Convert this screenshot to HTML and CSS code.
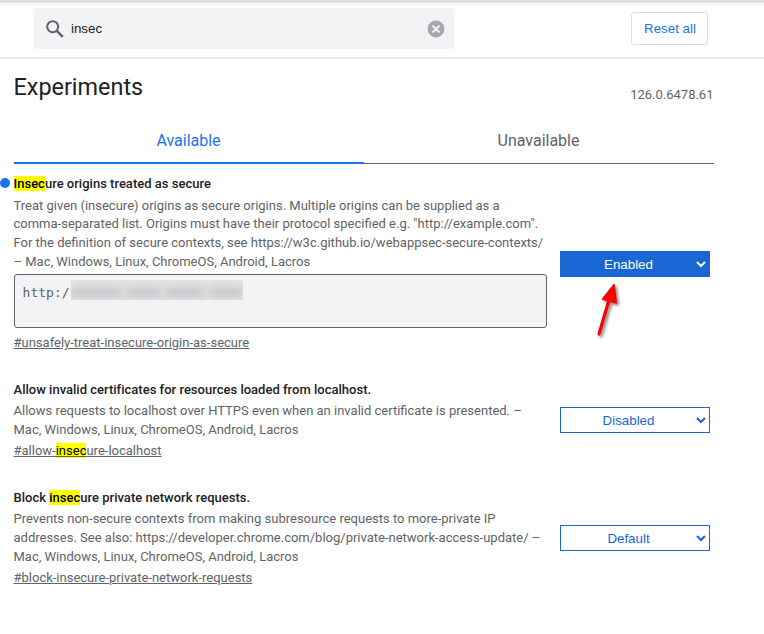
FILE: index.html
```html
<!DOCTYPE html>
<html lang="en">
<head>
<meta charset="utf-8">
<title>Experiments</title>
<link rel="stylesheet" href="styles.css">
</head>
<body>
<header class="toolbar">
  <div class="search">
    <svg class="search-icon" width="18" height="18" viewBox="0 0 18 18"><circle cx="6.7" cy="6.7" r="5.5" fill="none" stroke="#5f6368" stroke-width="2"/><path d="M10.8 10.8L16.8 16.8" stroke="#5f6368" stroke-width="2.4"/></svg>
    <span class="query">insec</span>
    <svg class="clear-icon" width="18" height="18" viewBox="0 0 18 18"><circle cx="9" cy="9" r="8.4" fill="#a5a8ab"/><path d="M5.5 5.5l7 7M12.5 5.5l-7 7" stroke="#f1f3f4" stroke-width="2"/></svg>
  </div>
  <button class="reset">Reset all</button>
</header>
<main>
  <div class="heading"><h1>Experiments</h1><span class="version">126.0.6478.61</span></div>
  <nav class="tabs"><div class="tab selected">Available</div><div class="tab">Unavailable</div></nav>
  <section class="experiment modified">
    <div class="body">
      <h2><mark>Insec</mark>ure origins treated as secure</h2>
      <p>Treat given (insecure) origins as secure origins. Multiple origins can be supplied as a<br>comma-separated list. Origins must have their protocol specified e.g. "http://example.com".<br>For the definition of secure contexts, see https://w3c.github.io/webappsec-secure-contexts/<br>– Mac, Windows, Linux, ChromeOS, Android, Lacros</p>
      <div class="origins"><span>http:/</span><div class="redacted"><i class="w1"></i><i class="w2"></i><i class="w3"></i><i class="w4"></i></div></div>
      <a class="permalink">#unsafely-treat-insecure-origin-as-secure</a>
    </div>
    <div class="action">
      <select class="choice active"><option>Enabled</option></select>
      <svg class="arrow" width="44" height="66" viewBox="0 0 44 66"><g fill="#f00"><path d="M14 54L24 20" stroke="#f00" stroke-width="3.2" stroke-linecap="round"/><path d="M28.5 4Q29.5 3.4 29.8 5L32 22.5Q32 24 30.4 23.5L17.4 20Q16.2 19.4 17.2 18.3Z"/></g></svg>
    </div>
  </section>
  <section class="experiment second">
    <div class="body">
      <h2>Allow invalid certificates for resources loaded from localhost.</h2>
      <p>Allows requests to localhost over HTTPS even when an invalid certificate is presented. –<br>Mac, Windows, Linux, ChromeOS, Android, Lacros</p>
      <a class="permalink">#allow-<mark>insec</mark>ure-localhost</a>
    </div>
    <div class="action"><select class="choice"><option>Disabled</option></select></div>
  </section>
  <section class="experiment third">
    <div class="body">
      <h2>Block <mark>insec</mark>ure private network requests.</h2>
      <p>Prevents non-secure contexts from making subresource requests to more-private IP<br>addresses. See also: https://developer.chrome.com/blog/private-network-access-update/ –<br>Mac, Windows, Linux, ChromeOS, Android, Lacros</p>
      <a class="permalink">#block-insecure-private-network-requests</a>
    </div>
    <div class="action"><select class="choice"><option>Default</option></select></div>
  </section>
</main>
</body>
</html>
```

FILE: styles.css
```css
* { box-sizing: border-box; }
body {
  margin: 0;
  background: #fff;
  color: #202124;
  font: 13px/18.85px Roboto, sans-serif;
  overflow: hidden;
}
.toolbar {
  height: 57px;
  padding: 8px 56px 0 34px;
  display: flex;
  justify-content: space-between;
  align-items: flex-start;
  background: linear-gradient(#dfe2e1 0, #d4d8d6 2px, #f1f2f2 3px, #fff 6px);
  box-shadow: 0 1px 0 #e6e8e8, 0 2px 0 #f0f1f1, 0 3px 0 #fafafa;
}
.search {
  width: 420px;
  height: 41px;
  padding: 0 9px 0 12px;
  display: flex;
  align-items: center;
  background: #f1f3f4;
  border-radius: 3px;
}
.query {
  flex: 1;
  margin-left: 7px;
  font: 13.33px "Liberation Sans", sans-serif;
}
.reset {
  width: 77px;
  height: 33px;
  margin-top: 4px;
  padding: 0 0 0 1px;
  border: 1px solid #dadce0;
  border-radius: 3px;
  background: #fff;
  color: #1a73e8;
  font: 13.33px "Liberation Sans", sans-serif;
}
main { width: 714px; padding-left: 14px; }
.heading {
  height: 60px;
  margin-left: -.5px;
  padding-right: .5px;
  display: flex;
  justify-content: space-between;
}
h1 { margin: 15px 0 0; font-size: 23.4px; line-height: 30px; font-weight: 400; }
.version { margin-top: 29px; color: #5f6368; }
.tabs { display: flex; height: 47px; }
.tab {
  flex: 1;
  padding-right: 1px;
  text-align: center;
  font-size: 16px;
  line-height: 47px;
  color: #5f6368;
  border-bottom: 1px solid #5f6368;
}
.tab.selected { color: #1a73e8; border-bottom: 2px solid #1a73e8; }
.experiment { display: flex; position: relative; width: 696px; }
.modified { height: 207px; padding-top: 11px; }
.modified::before {
  content: "";
  position: absolute;
  left: -14px;
  top: 14px;
  width: 10px;
  height: 10px;
  border-radius: 5px;
  background: #1a73e8;
}
.second { height: 108px; padding-top: 10px; }
.third { height: 120px; padding-top: 10px; }
.body { width: 533px; white-space: nowrap; color: #5f6368; }
h2 { margin: 0 0 2.5px; font-size: 13px; line-height: 18.85px; font-weight: 500; letter-spacing: .01px; color: #202124; }
p { margin: 0 0 2.5px; }
h2, p, .permalink { margin-left: -.5px; }
.modified h2 { margin-bottom: 2.8px; }
.modified p { margin-bottom: 1.7px; }
.second p { margin-bottom: 1.6px; }
mark { background: #ff0; color: #000; }
.permalink { display: block; text-decoration: underline; }
.origins {
  display: flex;
  height: 54px;
  margin-bottom: 6.4px;
  padding: 5px 7px 5px 7.6px;
  border: 1px solid #5f6368;
  border-radius: 3px;
  background: #f1f3f4;
  font: 13px/25px "DejaVu Sans Mono", monospace;
}
.redacted {
  display: flex;
  gap: 5px;
  align-items: center;
  width: 172px;
  height: 20px;
  margin-left: 1.4px;
  padding-top: 5px;
  overflow: hidden;
  background: #e4e5e6;
}
.redacted i { height: 11px; background: #c6c8ca; filter: blur(4px); }
.w1 { width: 50px; }
.w2 { width: 34px; }
.w3 { width: 39px; }
.w4 { width: 34px; }
.action { position: relative; width: 150px; margin-left: 13px; }
.choice {
  display: block;
  width: 150px;
  height: 26px;
  margin-top: 26px;
  padding-right: 1px;
  border: 1px solid #1967d2;
  border-radius: 0;
  background: #fff;
  color: #1967d2;
  font: 13.33px "Liberation Sans", sans-serif;
  text-align-last: center;
}
.modified .choice { margin-top: 76px; }
.third .choice { margin-top: 36px; }
.choice.active { background: #1967d2; color: #fff; }
.arrow {
  position: absolute;
  left: 24.7px;
  top: 105.4px;
  filter: drop-shadow(2px 2px 1.5px rgba(0, 0, 0, .5));
}
```
